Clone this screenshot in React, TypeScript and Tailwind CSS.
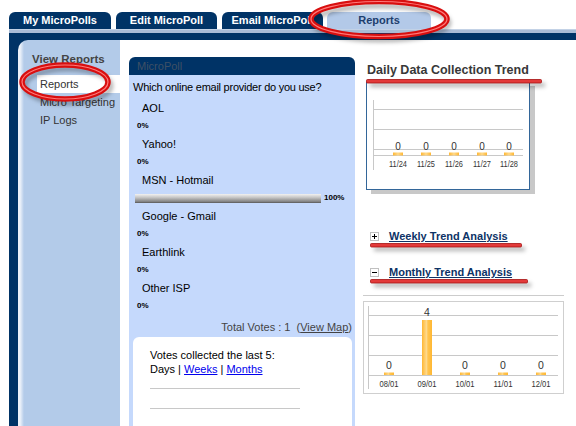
import clsx from 'clsx';

const options = [
  { name: 'AOL', pct: 0 },
  { name: 'Yahoo!', pct: 0 },
  { name: 'MSN - Hotmail', pct: 100 },
  { name: 'Google - Gmail', pct: 0 },
  { name: 'Earthlink', pct: 0 },
  { name: 'Other ISP', pct: 0 },
];

const daily = ['11/24', '11/25', '11/26', '11/27', '11/28'];
const monthly = [
  { label: '08/01', value: 0 },
  { label: '09/01', value: 4 },
  { label: '10/01', value: 0 },
  { label: '11/01', value: 0 },
  { label: '12/01', value: 0 },
];

function Tab({ label, active, className }: { label: string; active?: boolean; className: string }) {
  return (
    <div
      className={clsx(
        'h-[17px] rounded-t-[6px] flex items-center justify-center text-[11px] font-bold whitespace-nowrap overflow-hidden',
        active ? 'bg-[#b3c9e8] text-[#1d3e6e]' : 'bg-[#003366] text-white',
        className
      )}
    >
      {label}
    </div>
  );
}

function ToggleBox({ open }: { open: boolean }) {
  return (
    <svg width="9" height="9" viewBox="0 0 9 9">
      <rect x="0.5" y="0.5" width="8" height="8" fill="#fff" stroke="#808080" strokeDasharray="1 1" />
      <path d="M2 4.5h5" stroke="#000" />
      {!open && <path d="M4.5 2v5" stroke="#000" />}
    </svg>
  );
}

function DailyChart() {
  const xs = [31, 59, 87, 115, 142];
  return (
    <svg width="162" height="106" viewBox="0 0 162 106">
      <defs>
        <linearGradient id="dbar" x1="0" x2="1" y1="0" y2="0">
          <stop offset="0" stopColor="#ffb733" />
          <stop offset="0.5" stopColor="#ffd98a" />
          <stop offset="1" stopColor="#ffb733" />
        </linearGradient>
      </defs>
      <line x1="6.5" y1="17" x2="6.5" y2="87" stroke="#c8c8c8" />
      {[26, 46, 66, 72].map((y) => (
        <line key={y} x1="7" y1={y + 0.5} x2="156" y2={y + 0.5} stroke="#c8c8c8" />
      ))}
      {daily.map((d, i) => (
        <g key={d}>
          <text x={xs[i]} y="67" fontSize="10" textAnchor="middle" fill="#333" fontFamily="Liberation Sans, Arial, sans-serif">
            0
          </text>
          <rect x={xs[i] - 5} y="69.5" width="10" height="3" fill="url(#dbar)" />
          <text x={xs[i]} y="84" fontSize="9" textAnchor="middle" fill="#333" textLength="18" lengthAdjust="spacingAndGlyphs" fontFamily="Liberation Sans, Arial, sans-serif">
            {d}
          </text>
        </g>
      ))}
    </svg>
  );
}

function MonthlyChart() {
  const xs = [25, 63, 101, 139, 177];
  return (
    <svg width="199" height="91" viewBox="0 0 199 91">
      <defs>
        <linearGradient id="mbar" x1="0" x2="1" y1="0" y2="0">
          <stop offset="0" stopColor="#ffb733" />
          <stop offset="0.45" stopColor="#ffd98a" />
          <stop offset="0.6" stopColor="#ffc44e" />
          <stop offset="1" stopColor="#ffb733" />
        </linearGradient>
      </defs>
      <line x1="4.5" y1="4" x2="4.5" y2="87" stroke="#c8c8c8" />
      {[13, 33, 53, 73].map((y) => (
        <line key={y} x1="5" y1={y + 0.5} x2="194" y2={y + 0.5} stroke="#c8c8c8" />
      ))}
      {monthly.map((m, i) => {
        const h = m.value === 0 ? 2.5 : m.value * 13.75;
        return (
          <g key={m.label}>
            <rect x={xs[i] - 5} y={73 - h} width="10" height={h} fill="url(#mbar)" />
            <text x={xs[i]} y={m.value === 0 ? 67 : 14} fontSize="10.5" textAnchor="middle" fill="#333" fontFamily="Liberation Sans, Arial, sans-serif">
              {m.value}
            </text>
            <text x={xs[i]} y="85" fontSize="9" textAnchor="middle" fill="#333" textLength="19" lengthAdjust="spacingAndGlyphs" fontFamily="Liberation Sans, Arial, sans-serif">
              {m.label}
            </text>
          </g>
        );
      })}
    </svg>
  );
}

function Annotations() {
  return (
    <svg className="absolute left-0 top-0 pointer-events-none" width="576" height="426" viewBox="0 0 576 426">
      <defs>
        <filter id="blur" x="-20%" y="-50%" width="140%" height="200%">
          <feGaussianBlur stdDeviation="2" />
        </filter>
      </defs>
      {/* shadows */}
      <g filter="url(#blur)" fill="none" stroke="rgba(0,0,0,0.35)" strokeWidth="4">
        <ellipse cx="381" cy="23" rx="68" ry="17" />
        <ellipse cx="68" cy="86" rx="43" ry="17" />
      </g>
      <g filter="url(#blur)" fill="rgba(0,0,0,0.3)">
        <rect x="370" y="83" width="175" height="4" />
        <rect x="374" y="247" width="151" height="4" />
        <rect x="374" y="283" width="157" height="4" />
      </g>
      {/* ellipses */}
      <g fill="none">
        <ellipse cx="379" cy="19" rx="68" ry="17.5" stroke="#d80f0f" strokeWidth="5.5" />
        <ellipse cx="379" cy="19" rx="68" ry="17.5" stroke="#ff7a7a" strokeWidth="1.2" />
        <ellipse cx="65" cy="82" rx="43" ry="17" stroke="#d80f0f" strokeWidth="5.5" />
        <ellipse cx="65" cy="82" rx="43" ry="17" stroke="#ff7a7a" strokeWidth="1.2" />
      </g>
      {/* underlines */}
      <g fill="#e33a3a" stroke="#a51212" strokeWidth="0.8">
        <rect x="366.5" y="79.5" width="175" height="3.5" rx="1" />
        <rect x="370.5" y="243.5" width="151" height="3.5" rx="1" />
        <rect x="370.5" y="279.5" width="157" height="3.5" rx="1" />
      </g>
    </svg>
  );
}

export default function App() {
  return (
    <div className="relative w-[576px] h-[426px] overflow-hidden bg-white font-['Liberation_Sans',Arial,sans-serif] text-black">
      {/* Tabs */}
      <div className="flex items-end gap-[5px] pl-[9px] pt-[12px]">
        <Tab label="My MicroPolls" className="w-[102px]" />
        <Tab label="Edit MicroPoll" className="w-[101px]" />
        <Tab label="Email MicroPoll" className="w-[101px]" />
        <Tab label="Reports" active className="w-[104px] ml-[-1px]" />
      </div>
      <div className="ml-[9px] h-[4px] bg-[#a9bcd6] border-t border-[#c3d2e6]" />
      <div className="ml-[9px] h-[7px] bg-[#003366]" />

      <div className="flex h-[386px]">
        {/* Sidebar */}
        <div className="ml-[9px] w-[111px] pl-[9px] bg-[#003366]">
          <div className="h-full rounded-tl-[10px] bg-[linear-gradient(to_right,#eef3fa_0px,#eef3fa_2px,#b3cbe9_6px)] pt-[11px]">
            <div className="pl-[14px] h-[16px] leading-[16px] text-[11.5px] font-bold text-[#444]">View Reports</div>
            <div className="mt-[8px] flex flex-col text-[11px] text-[#333]">
              <div className="ml-[19px] h-[18px] leading-[18px] pl-[3px] bg-white">Reports</div>
              <div className="pl-[22px] h-[18px] leading-[18px] whitespace-nowrap">Micro Targeting</div>
              <div className="pl-[22px] h-[18px] leading-[18px]">IP Logs</div>
            </div>
          </div>
        </div>

        {/* Poll */}
        <div className="ml-[9px] w-[226px] mt-[17px] flex flex-col">
          <div className="h-[18px] rounded-t-[6px] bg-[#003366] pl-[8px] text-[11px] leading-[18px] text-[#3f5065]">MicroPoll</div>
          <div className="flex-1 bg-[#c5d9fc] pl-[4px] pr-[3px] pt-[3px] flex flex-col">
            <div className="h-[18px] leading-[18px] text-[11px] tracking-[-0.25px] whitespace-nowrap">Which online email provider do you use?</div>
            <div className="mt-[3px] flex flex-col">
              {options.map((o) => (
                <div key={o.name} className="flex flex-col">
                  <div className="h-[18px] leading-[18px] pl-[9px] text-[11px]">{o.name}</div>
                  {o.pct > 0 ? (
                    <div className="h-[18px] flex items-center pl-[2px] gap-[3px]">
                      <div className="w-[186px] h-[9px] bg-[linear-gradient(to_bottom,#f2f2f2,#c4c4c4_45%,#7c7c7c)] border-b border-[#666]" />
                      <span className="text-[8px] font-bold leading-none">{o.pct}%</span>
                    </div>
                  ) : (
                    <div className="h-[18px] leading-[18px] pl-[4px] text-[8px] font-bold">{o.pct}%</div>
                  )}
                </div>
              ))}
            </div>
            <div className="mt-[3px] h-[18px] leading-[18px] text-right text-[11px] text-[#444] whitespace-pre">
              Total Votes : 1{'  '}(<span className="underline">View Map</span>)
            </div>
            <div className="mt-[1px] flex-1 bg-white rounded-t-[6px] pl-[17px] pt-[11px] text-[11px]">
              <div className="h-[14px] leading-[14px]">Votes collected the last 5:</div>
              <div className="h-[14px] leading-[14px]">
                Days | <span className="text-[#0000ee] underline">Weeks</span> | <span className="text-[#0000ee] underline">Months</span>
              </div>
              <div className="mt-[12px] w-[150px] h-px bg-[#c8c8c8]" />
              <div className="mt-[19px] w-[150px] h-px bg-[#c8c8c8]" />
            </div>
          </div>
        </div>

        {/* Right column */}
        <div className="flex-1 pl-[11px] flex flex-col">
          <div className="mt-[22px] h-[16px] leading-[16px] text-[12.5px] font-bold text-[#383838] pl-[1px] whitespace-nowrap">
            Daily Data Collection Trend
          </div>
          <div className="mt-[4px] w-[164px] h-[108px] border border-[#336699] bg-white shadow-[5px_4px_0_#c8c8c8]">
            <DailyChart />
          </div>
          <div className="mt-[39px] h-[14px] flex items-center pl-[4px] gap-[10px]">
            <ToggleBox open={false} />
            <span className="text-[11px] font-bold text-[#0d3366] underline leading-[14px]">Weekly Trend Analysis</span>
          </div>
          <div className="mt-[22px] h-[14px] flex items-center pl-[4px] gap-[10px]">
            <ToggleBox open />
            <span className="text-[11px] font-bold text-[#0d3366] underline leading-[14px]">Monthly Trend Analysis</span>
          </div>
          <div className="mt-[16px] ml-[-3px] w-[201px] h-px bg-[#cccccc]" />
          <div className="mt-[5px] ml-[-3px] w-[201px] h-[93px] border border-[#cfcfcf]">
            <MonthlyChart />
          </div>
        </div>
      </div>

      <Annotations />
    </div>
  );
}
